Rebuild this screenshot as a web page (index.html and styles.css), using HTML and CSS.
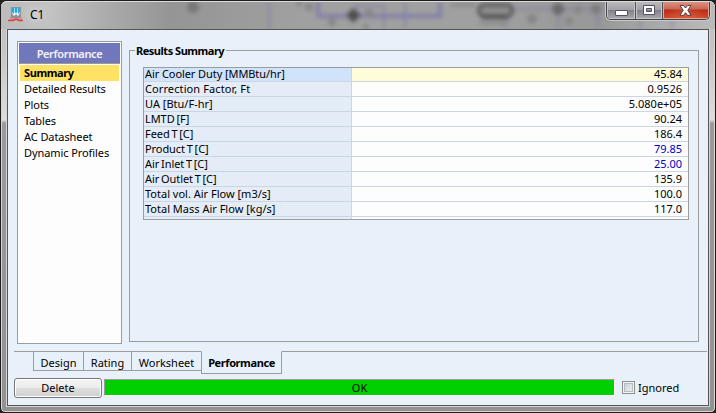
FILE: index.html
```html
<!DOCTYPE html>
<html lang="en">
<head>
<meta charset="utf-8">
<title>C1</title>
<link rel="stylesheet" href="styles.css">
</head>
<body>
<div class="window">
  <header class="titlebar">
    <svg class="backdrop" width="714" height="28" viewBox="1 1 714 28" aria-hidden="true">
      <defs><filter id="soft" x="-20%" y="-80%" width="140%" height="260%"><feGaussianBlur stdDeviation="2"/></filter></defs>
      <g filter="url(#soft)">
        <circle cx="193" cy="7" r="6" fill="#777"/>
        <g fill="none" stroke="#7774a8" stroke-width="4" opacity=".75">
          <path d="M318 2V14Q318 16 321 16H440V2"/>
          <path d="M269 2V29M356 16V6H384V28M405 2V28M514 9H604M506 14V28M558 14V28M598 12V28M640 20V28M672 20V28" stroke-width="3" opacity=".6"/>
        </g>
        <path d="M346 15L353 8L361 15L353 23Z" fill="#505050"/>
        <rect x="479" y="5" width="33" height="11" rx="5" fill="#8e8e8e" stroke="#5c5c5c" stroke-width="4"/>
        <path d="M482 17H508" stroke="#505050" stroke-width="4"/>
        <path d="M451 5H475M480 23H506" stroke="#868686" stroke-width="3"/>
        <circle cx="558" cy="9" r="6" fill="#6a6a6a"/><circle cx="596" cy="9" r="5" fill="#7c7c7c"/>
        <g fill="#868686"><circle cx="309" cy="7" r="4"/><circle cx="332" cy="22" r="4"/><circle cx="369" cy="13" r="4"/><circle cx="366" cy="27" r="3"/><circle cx="299" cy="3" r="3"/><circle cx="532" cy="19" r="5"/><circle cx="578" cy="10" r="4"/><circle cx="569" cy="21" r="4"/></g>
      </g>
    </svg>
    <svg class="app-icon" width="16" height="16" viewBox="0 0 16 16" aria-hidden="true">
      <path d="M3 0H13V9L14 12H2L3 9Z" fill="#87949a"/>
      <path d="M4 1H12V6L10 9L8 7L6 9L4 6Z" fill="#fff"/>
      <path d="M4 1H6.500V5L5.500 7L4 5ZM7 1H9V5L8 7L7 5ZM9.500 1H12V5L10.500 7L9.500 5Z" fill="#2aabe8"/>
      <path d="M1 13L3 11H13L15 13Z" fill="#ef8b8b"/>
      <path d="M0 13.500H5L8 12L11 13.500H15" fill="none" stroke="#d94044" stroke-width="1.500"/>
    </svg>
    <span class="title">C1</span>
    <div class="controls">
      <span class="ctl min"><svg width="13" height="6"><rect x=".5" y=".5" width="12" height="5" rx=".5" fill="#fff" stroke="#505366"/></svg></span>
      <span class="ctl max"><svg width="12" height="10"><path fill-rule="evenodd" d="M.5 .5H11.500V9.500H.5ZM3.500 3.500V6.500H8.500V3.500Z" fill="#fff" stroke="#505366"/></svg></span>
      <span class="ctl close"><svg width="13" height="11"><path d="M1 .5H4.500L6.500 3L8.500 .5H12L8.800 5.300L12 10.300H8.500L6.500 7.700L4.500 10.300H1L4.200 5.300Z" fill="#fff" stroke="#55404a"/></svg></span>
    </div>
  </header>
  <main class="client">
    <div class="upper">
      <nav class="sidebar">
        <h2>Performance</h2>
        <ul>
          <li class="selected"><span>Summary</span></li>
          <li>Detailed Results</li>
          <li>Plots</li>
          <li>Tables</li>
          <li>AC Datasheet</li>
          <li>Dynamic Profiles</li>
        </ul>
      </nav>
      <section class="group">
        <h3>Results Summary</h3>
        <div class="grid">
          <div class="row active"><span>Air Cooler Duty [MMBtu/hr]</span><b>45.84</b></div>
          <div class="row wide"><span>Correction Factor, Ft</span><b>0.9526</b></div>
          <div class="row"><span>UA [Btu/F-hr]</span><b>5.080e+05</b></div>
          <div class="row tight"><span>LMTD [F]</span><b>90.24</b></div>
          <div class="row tight"><span>Feed T [C]</span><b>186.4</b></div>
          <div class="row tight spec"><span>Product T [C]</span><b>79.85</b></div>
          <div class="row tight spec"><span>Air Inlet T [C]</span><b>25.00</b></div>
          <div class="row tight"><span>Air Outlet T [C]</span><b>135.9</b></div>
          <div class="row"><span>Total vol. Air Flow [m3/s]</span><b>100.0</b></div>
          <div class="row"><span>Total Mass Air Flow [kg/s]</span><b>117.0</b></div>
          <div class="row last"><span></span><b></b></div>
        </div>
      </section>
    </div>
    <div class="tabs">
      <span class="tab design">Design</span><span class="tab rating">Rating</span><span class="tab worksheet">Worksheet</span><span class="tab current">Performance</span>
    </div>
    <footer class="footer">
      <button class="delete">Delete</button>
      <div class="status">OK</div>
      <label class="ignored"><i class="box"></i>Ignored</label>
    </footer>
  </main>
</div>
</body>
</html>
```
FILE: styles.css
```css
* { box-sizing: border-box; }
body {
  margin: 0;
  background: #242424;
  font: 11px/16px "Noto Sans", "Open Sans", sans-serif;
  color: #000;
}
.window {
  width: 716px;
  height: 413px;
  border: 1px solid #1c1c1c;
  border-radius: 7px 7px 5px 5px;
  box-shadow: inset 0 0 0 1px #d8d8d8;
  background: linear-gradient(#bdbdbd 0, #c6c3c3 45px, #e0dcdc 119px, #9b9999 122px, #929292 100%);
  padding: 0 6px 6px;
}
.titlebar {
  position: relative;
  display: flex;
  height: 28px;
  margin: 0 -6px;
  padding-left: 7px;
  border-top: 1px solid #ddd;
  border-radius: 6px 6px 0 0;
  overflow: hidden;
  background: linear-gradient(90deg, #bcbcbc, #c2c2c2 50px, #aaa 110px, #959595 170px, #a0a0a0 300px, #a0a0a0 480px, #989898 600px, #bbb 714px);
}
.backdrop { position: absolute; left: 0; top: -1px; }
.app-icon { margin-top: 5px; }
.title {
  margin: 4px 0 0 6px;
  font-size: 12px;
  line-height: 17px;
  letter-spacing: -.2px;
  text-shadow: 0 0 8px #fff, 0 0 14px #fff;
}
.controls {
  position: relative;
  display: flex;
  width: 104px;
  height: 19px;
  margin: -1px 5px 0 auto;
  border: 1px solid #42424a;
  border-top: 0;
  border-radius: 0 0 5px 5px;
  box-shadow: 0 0 0 1px #c9c9c9;
  overflow: hidden;
}
.ctl {
  display: flex;
  justify-content: center;
  width: 28px;
  padding-top: 5px;
  border: 1px solid #c5c5c8;
  border-top: 0;
  background: linear-gradient(#bdbdc0, #a2a2a7 50%, #7d7d84 51%, #a5a5aa);
}
.ctl + .ctl { box-shadow: -1px 0 #50505a; }
.min { padding-top: 9px; }
.max { width: 26px; margin-left: 1px; padding-top: 4px; }
.close {
  flex: 1;
  margin-left: 1px;
  padding: 4px 2px 0 0;
  border-color: #e6a292;
  background: radial-gradient(ellipse at 50% 110%, #e9734c80, transparent 65%), linear-gradient(#dc9a8c, #cc6451 48%, #b72c18 52%, #cf4a2c);
}
.client {
  height: 377px;
  border: 1px solid #555;
  background: #e8f0fa;
  box-shadow: 0 0 0 1px #d5d5d5;
  padding: 11px 1px 0 6px;
}
.upper { display: flex; height: 303px; padding-left: 3px; }
.sidebar {
  width: 105px;
  border: 1px solid #9c9c9c;
  background: #fdfdfd;
  padding: 1px;
}
h2, h3, ul { margin: 0; padding: 0; font-size: 11px; }
h2 {
  height: 21px;
  border-bottom: 1px solid #999;
  background: #7177bb;
  color: #f4f4fc;
  text-align: center;
  line-height: 22px;
  font-weight: 600;
  letter-spacing: -.35px;
}
ul { list-style: none; padding: 1px 1px; }
li { height: 16px; padding-left: 4px; white-space: nowrap; letter-spacing: -.08px; }
.selected { background: #ffe164; font-weight: 700; letter-spacing: -.4px; }
.group {
  width: 570px;
  height: 292px;
  margin: 9px 0 0 7px;
  border: 1px solid #9c9c9c;
  padding: 0 9px 0 13px;
}
h3 {
  width: 91px;
  height: 16px;
  margin: -8px 0 8px -8px;
  padding-left: 1px;
  background: #e8f0fa;
  white-space: nowrap;
  letter-spacing: -.48px;
}
.grid { width: 546px; height: 153px; border: 1px solid #9c9c9c; }
.row { display: flex; height: 15px; line-height: 13px; background: #fdfdfd; border-bottom: 1px solid #cbd6e5; }
.row span { width: 208px; padding-left: 1px; border-right: 1px solid #cbd6e5; background: #e4ecf7; white-space: nowrap; }
.row b { flex: 1; padding-right: 6px; text-align: right; font-weight: 400; }
.row.active { height: 14px; line-height: 11px; background: #fffcd9; }
.row.active span { background: #d1e3fa; letter-spacing: -.08px; }
.tight span { word-spacing: -1px; letter-spacing: -.07px; }
.wide span { letter-spacing: .1px; }
.spec b { color: #0000c0; }
.row.last { height: 2px; border: 0; }
.tabs { display: flex; height: 26px; margin-top: 7px; padding-left: 19px; border-top: 1px solid #9c9c9c; }
.tab { height: 20px; margin-top: -1px; border: 1px solid #9c9c9c; border-left: 0; text-align: center; line-height: 22px; white-space: nowrap; }
.design { width: 51px; border-left: 1px solid #9c9c9c; }
.rating { width: 48px; }
.worksheet { width: 70px; }
.current {
  width: 81px;
  height: 23px;
  margin-left: -1px;
  border-left: 1px solid #9c9c9c;
  border-top-color: #e8f0fa;
  background: #e8f0fa;
  font-weight: 700;
  letter-spacing: -.4px;
}
.footer { display: flex; align-items: center; height: 21px; }
.delete {
  width: 88px;
  height: 20px;
  padding: 0;
  border: 1px solid #777;
  border-radius: 3px;
  background: linear-gradient(#f4f4f4, #ececec 50%, #dedede 51%, #d0d0d0);
  box-shadow: inset 0 0 0 1px #fff;
  font: inherit;
}
.status {
  width: 511px;
  height: 17px;
  margin-left: 2px;
  border: 1px solid #fff;
  border-top-color: #9c9c9c;
  border-left-color: #9c9c9c;
  background: #00cf00;
  text-align: center;
  line-height: 15px;
}
.ignored { display: flex; align-items: center; margin-left: 7px; }
.box {
  width: 13px;
  height: 13px;
  margin-right: 3px;
  border: 1px solid #8e8f8f;
  background: linear-gradient(135deg, #c5cbd2, #f5f5f5);
  box-shadow: inset 0 0 0 1px #f4f4f4, inset 0 0 0 2px #b5bcc6;
}
```
